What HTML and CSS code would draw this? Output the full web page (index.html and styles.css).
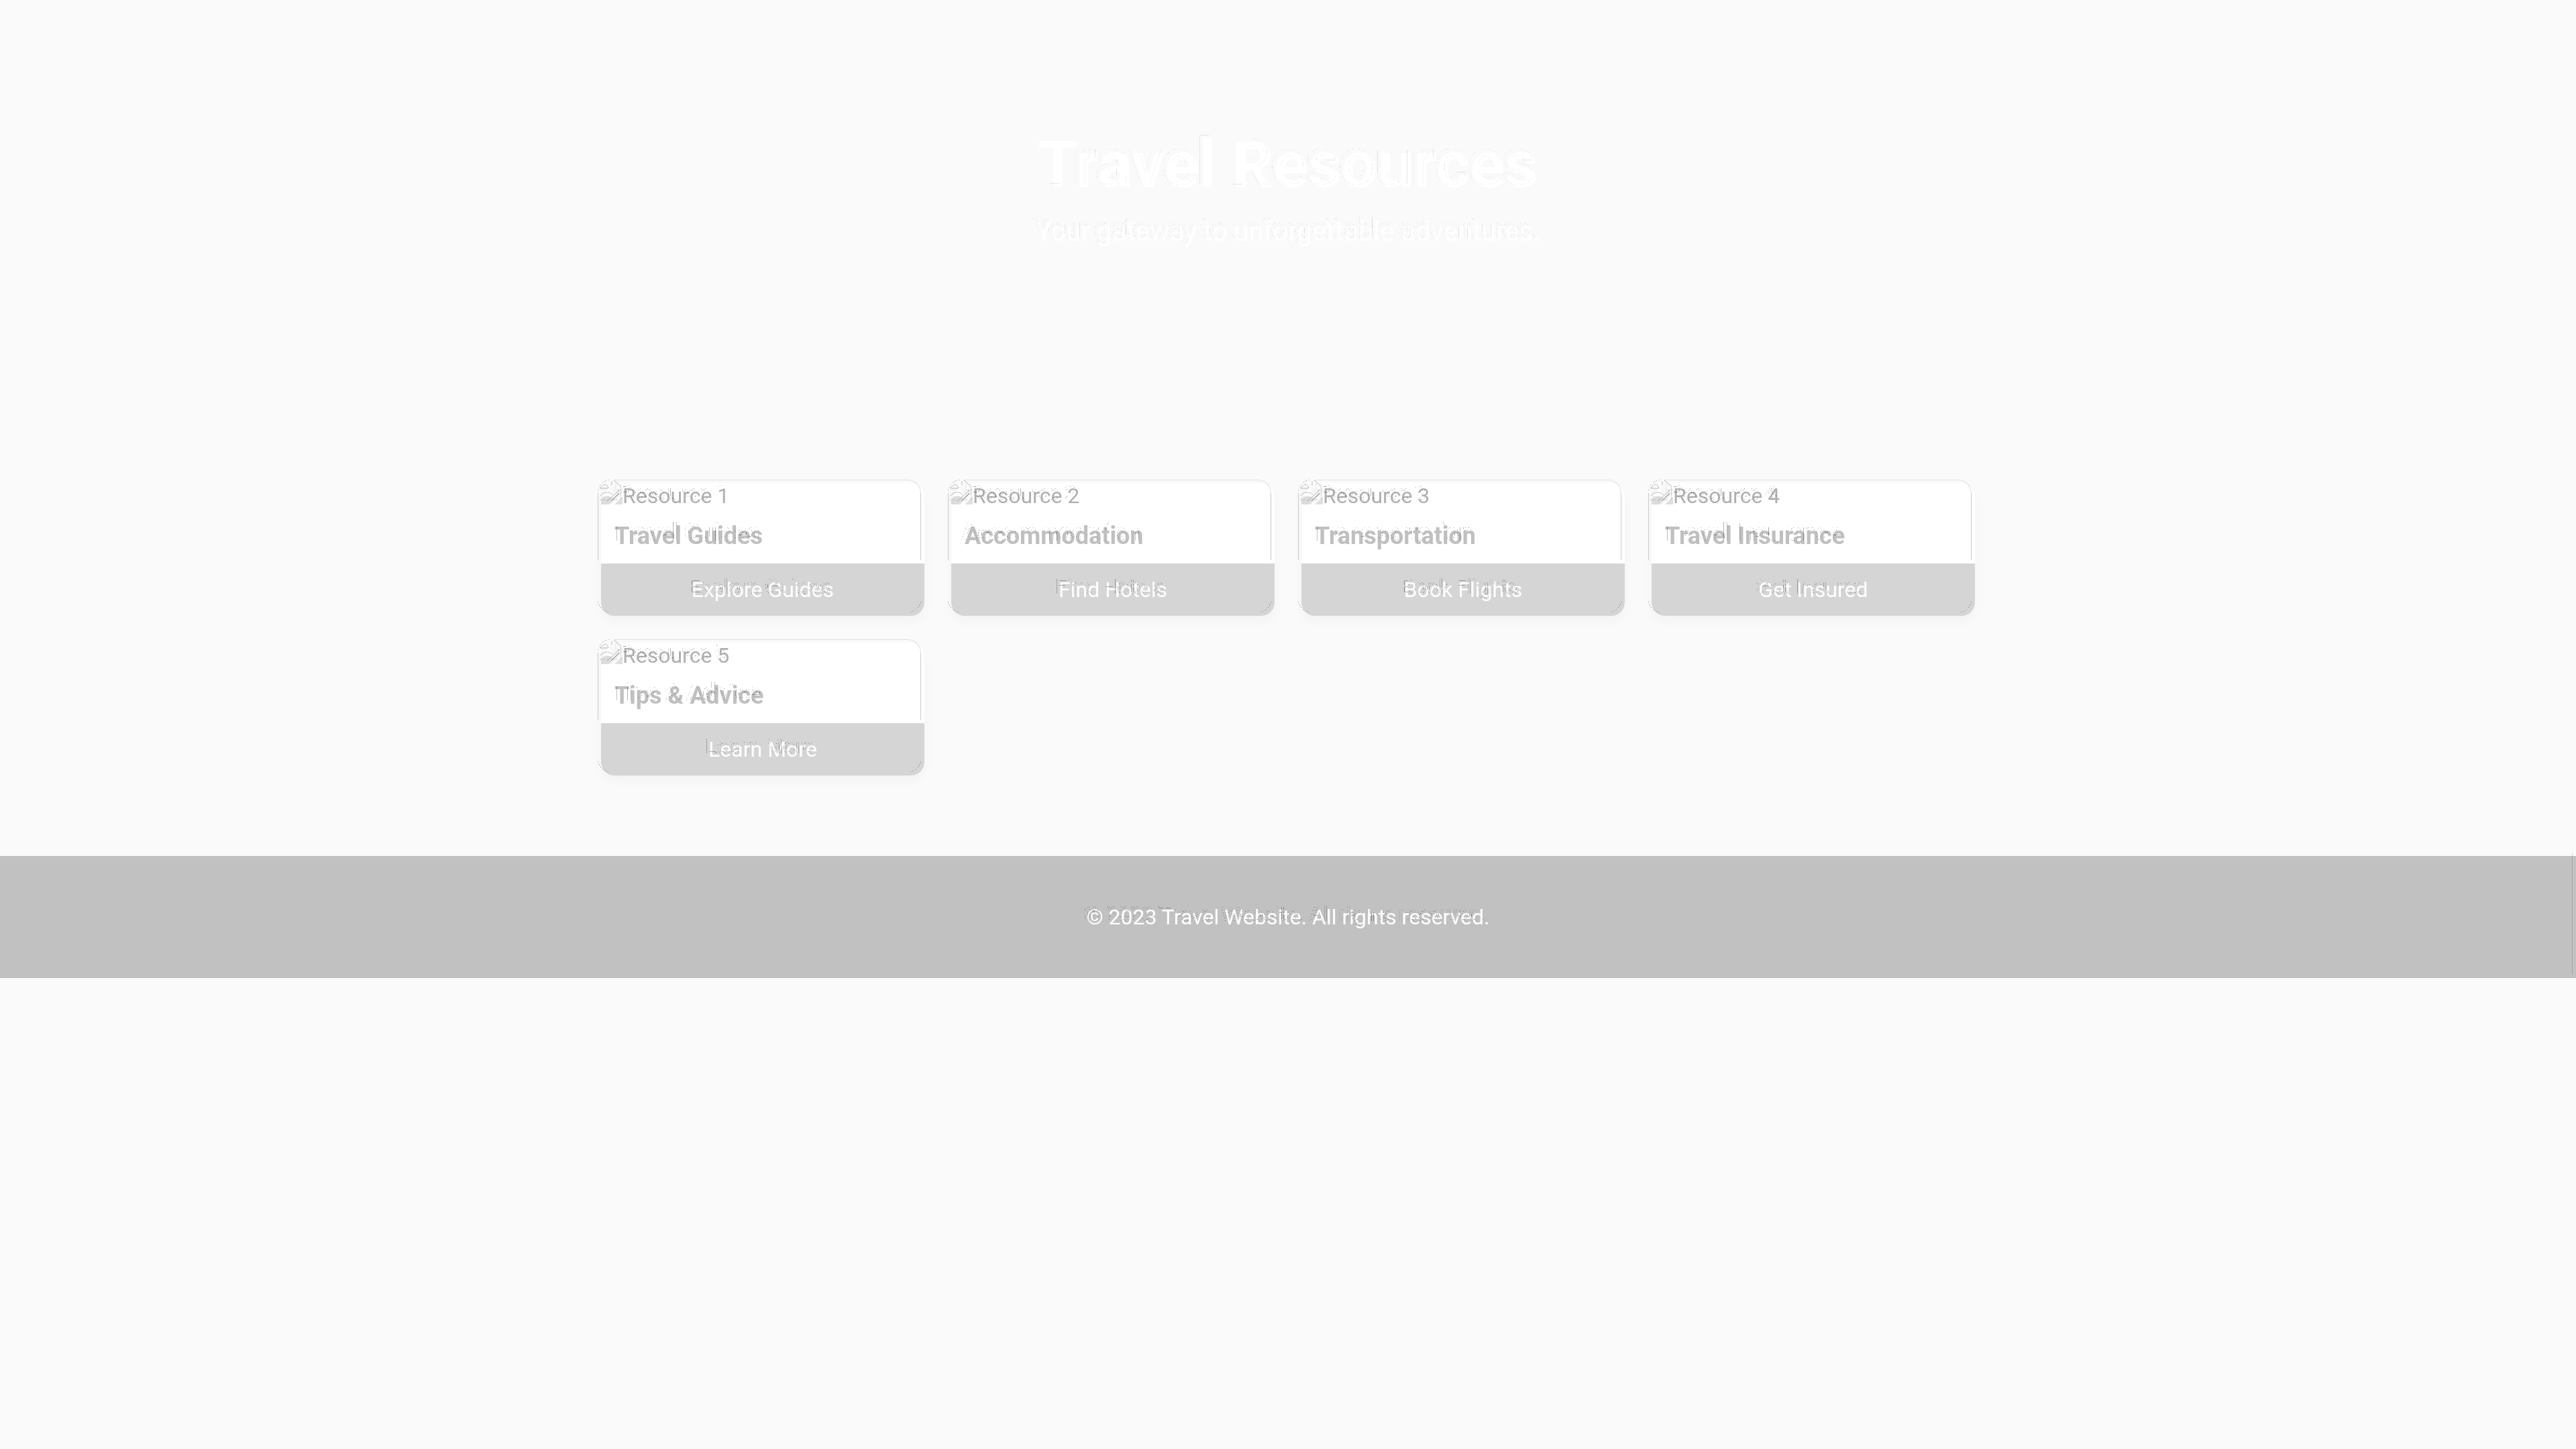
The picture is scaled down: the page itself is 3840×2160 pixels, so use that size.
FILE: index.html
```html
<!DOCTYPE html>
<html lang="en">
<head>
<meta charset="utf-8">
<title>Travel Resources</title>
<link rel="stylesheet" href="styles.css">
</head>
<body>
<svg class="defs" width="0" height="0" aria-hidden="true">
  <!-- Thin contours, shifted up and left of their source -->
  <filter id="contour-soft" x="-5%" y="-20%" width="110%" height="140%" color-interpolation-filters="sRGB">
    <feComponentTransfer in="SourceAlpha" result="edge"><feFuncA type="table" tableValues="0 0 .12 0 0"/></feComponentTransfer>
    <feOffset in="edge" dx="-5" dy="-5" result="moved"/>
    <feMerge><feMergeNode in="SourceGraphic"/><feMergeNode in="moved"/></feMerge>
  </filter>
  <filter id="contour-text" x="-10%" y="-30%" width="120%" height="160%" color-interpolation-filters="sRGB">
    <feComponentTransfer in="SourceAlpha" result="edge"><feFuncA type="table" tableValues="0 0 0 .45 0 0 0"/></feComponentTransfer>
    <feOffset in="edge" dx="-5" dy="-5" result="moved"/>
    <feMerge><feMergeNode in="SourceGraphic"/><feMergeNode in="moved"/></feMerge>
  </filter>
  <filter id="contour-only" x="-10%" y="-20%" width="120%" height="140%" color-interpolation-filters="sRGB">
    <feComponentTransfer in="SourceAlpha" result="edge"><feFuncA type="table" tableValues="0 0 0 .5 0 0 0"/></feComponentTransfer>
    <feOffset in="edge" dx="-5" dy="-5"/>
  </filter>
  <linearGradient id="sky" x1="0" y1="0" x2="0" y2="1"><stop offset="0" stop-color="#fcfcfc"/><stop offset="1" stop-color="#ececec"/></linearGradient>
  <symbol id="picture" viewBox="0 0 32 32">
    <path d="M0 0H22L32 10V15L14 32H0Z" fill="url(#sky)"/>
    <path d="M22 0V10H32Z" fill="#fff" stroke="#e2e2e2"/>
    <path d="M2 18L12 8L21 18L12 23Z" fill="#fff"/>
    <path d="M0 25C5 18 13 18 19 24L11 32H0Z" fill="#dcdcdc"/>
    <path d="M32 20V32H20Z" fill="#e0e0e0"/>
  </symbol>
  <symbol id="picture-lines" viewBox="0 0 32 32" overflow="visible">
    <g fill="none" stroke="#999" stroke-dasharray="2 1">
      <path d="M-1 8Q0 5 3 4Q6 0 9 4Q11 6 10 8H-1"/>
      <path d="M-1 19Q2 15 8 14Q14 14 18 18"/>
      <path d="M9 27L27 11M15 27L27 16M19 -4L29 4M16 -2V4"/>
      <path d="M-2 25H6M19 25H25" stroke="#bbb"/>
    </g>
  </symbol>
</svg>

<header class="hero">
  <h1 class="hero-title">Travel Resources</h1>
  <p class="hero-text">Your gateway to unforgettable adventures.</p>
</header>

<main class="resources">
  <article class="card">
    <div class="card-image"><svg class="card-icon" aria-hidden="true"><use href="#picture"/></svg>Resource 1</div>
    <svg class="card-lines" aria-hidden="true"><use href="#picture-lines"/></svg>
    <h2 class="card-title"><span class="label">Travel Guides</span></h2>
    <a class="card-link" href="#guides"><span class="label">Explore Guides</span></a>
  </article>
  <article class="card">
    <div class="card-image"><svg class="card-icon" aria-hidden="true"><use href="#picture"/></svg>Resource 2</div>
    <svg class="card-lines" aria-hidden="true"><use href="#picture-lines"/></svg>
    <h2 class="card-title"><span class="label">Accommodation</span></h2>
    <a class="card-link" href="#hotels"><span class="label">Find Hotels</span></a>
  </article>
  <article class="card">
    <div class="card-image"><svg class="card-icon" aria-hidden="true"><use href="#picture"/></svg>Resource 3</div>
    <svg class="card-lines" aria-hidden="true"><use href="#picture-lines"/></svg>
    <h2 class="card-title"><span class="label">Transportation</span></h2>
    <a class="card-link" href="#flights"><span class="label">Book Flights</span></a>
  </article>
  <article class="card">
    <div class="card-image"><svg class="card-icon" aria-hidden="true"><use href="#picture"/></svg>Resource 4</div>
    <svg class="card-lines" aria-hidden="true"><use href="#picture-lines"/></svg>
    <h2 class="card-title"><span class="label">Travel Insurance</span></h2>
    <a class="card-link" href="#insurance"><span class="label">Get Insured</span></a>
  </article>
  <article class="card">
    <div class="card-image"><svg class="card-icon" aria-hidden="true"><use href="#picture"/></svg>Resource 5</div>
    <svg class="card-lines" aria-hidden="true"><use href="#picture-lines"/></svg>
    <h2 class="card-title"><span class="label">Tips &amp; Advice</span></h2>
    <a class="card-link" href="#tips"><span class="label">Learn More</span></a>
  </article>
</main>

<footer class="footer"><p class="footer-text label">© 2023 Travel Website. All rights reserved.</p></footer>
</body>
</html>
```
FILE: styles.css
```css
* { box-sizing: border-box; }

body {
  margin: 0;
  background: #fafafa;
  color: #b0b0b0;
  font: 32px/38px Roboto, sans-serif;
}

.defs { position: absolute; }

.hero {
  display: flex;
  flex-direction: column;
  align-items: center;
  justify-content: center;
  gap: 20px;
  min-height: 560px;
  color: #fff;
  text-align: center;
}

.hero-title {
  margin: 0;
  font-size: 96px;
  line-height: 112px;
  font-weight: 700;
  filter: url(#contour-soft);
}

.hero-text {
  margin: 0;
  font-size: 40px;
  line-height: 48px;
  filter: url(#contour-soft);
}

.resources {
  display: grid;
  grid-template-columns: repeat(4, 1fr);
  gap: 40px;
  max-width: 2048px;
  margin: 0 auto;
  padding: 160px 0 120px;
}

.card {
  position: relative;
  border-radius: 20px;
  background: #fff;
  box-shadow: 0 8px 16px rgba(0, 0, 0, 0.03);
}

/* Hairline echo of the card's white area: sides, then top */
.card::before {
  content: "";
  position: absolute;
  inset: 15px 5px 83px -5px;
  border: solid #cacaca;
  border-width: 0 1px;
}

.card::after {
  content: "";
  position: absolute;
  inset: -5px 5px auto 20px;
  height: 20px;
  border: solid #e0e0e0;
  border-width: 1px 1px 0 0;
  border-radius: 0 20px 0 0;
}

.card-image {
  display: flex;
  height: 38px;
  overflow: hidden;
  border-radius: 20px 20px 0 0;
  filter: url(#contour-text);
}

.card-icon {
  width: 32px;
  height: 32px;
}

.card-lines {
  position: absolute;
  top: 0;
  left: 0;
  width: 32px;
  height: 32px;
  overflow: visible;
}

.label {
  display: inline-block;
  filter: url(#contour-text);
}

.card-title {
  margin: 0;
  padding: 20px;
  color: #c0c0c0;
  font-size: 36px;
  line-height: 42px;
  font-weight: 700;
}

.card-title .label { display: block; width: fit-content; }

.card-link {
  position: relative;
  display: block;
  padding: 20px;
  border-radius: 0 0 20px 20px;
  background: #d5d5d5;
  color: #fff;
  text-align: center;
  text-decoration: none;
}

.card-link::after {
  content: "";
  position: absolute;
  inset: 0;
  border-radius: 0 0 20px 20px;
  background: #d5d5d5;
  filter: url(#contour-only);
}

.footer {
  position: relative;
  padding: 72px 40px;
  background: #c1c1c1;
  color: #fff;
  text-align: center;
}

.footer::after {
  content: "";
  position: absolute;
  top: -5px;
  right: 5px;
  width: 1px;
  height: 100%;
  background: rgba(0, 0, 0, 0.14);
}

.footer-text { margin: 0; vertical-align: top; }
```
